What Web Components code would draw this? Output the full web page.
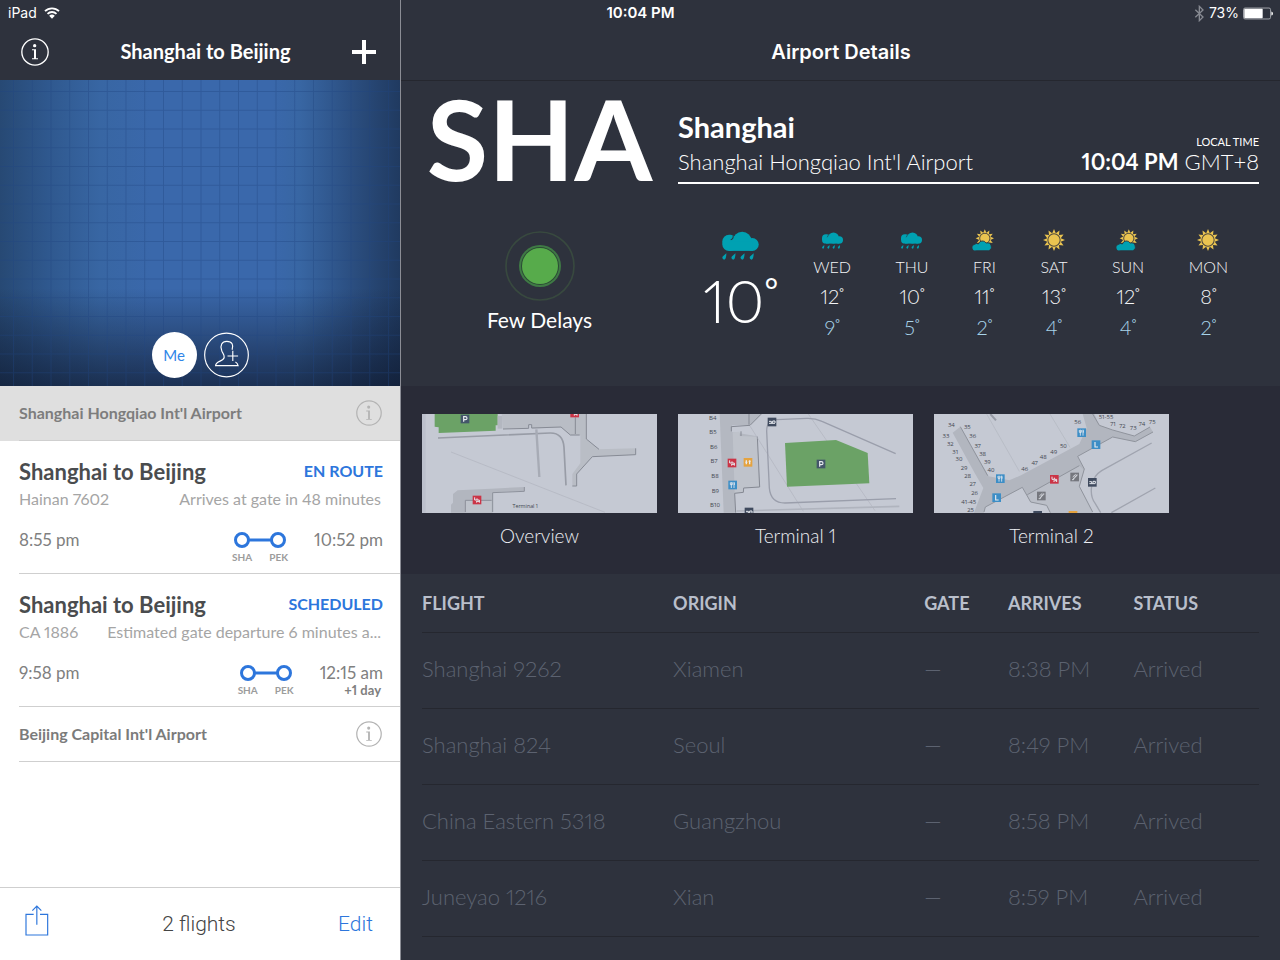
<!DOCTYPE html>
<html lang="en">
<head>
<meta charset="utf-8">
<meta name="viewport" content="width=device-width, initial-scale=1">
<title>Airport Details</title>
<style>
  html, body { height: 100%; }

  body {
    margin: 0;
    overflow: hidden;
    font-family: Lato, "Open Sans", sans-serif;
    font-variant-numeric: proportional-nums;
    --bar: #2e323d;
    --blue: #2d76dc;
    --system: Inter, Roboto, sans-serif;
  }
</style>
</head>
<body>
<flight-app></flight-app>

<script>
/* Attach an open shadow root filled with a copy of the markup */
function render(host, html) {
  let template = document.createElement('template');
  template.innerHTML = html;
  host.attachShadow({ mode: 'open' });
  host.shadowRoot.appendChild(document.importNode(template.content, true));
}

function define(name, view) {
  customElements.define(name, class extends HTMLElement {
    connectedCallback() {
      if(!this.shadowRoot)
        render(this, view(this));
    }
  });
}

/* Status bar */
define('status-bar', () => /* html */ `
  <style>
    :host {
      display: grid;
      grid-template-columns: 1fr auto 1fr;
      align-items: center;
      height: 26px;
      padding: 0 7px 0 8px;
      color: #fff;
      font: 400 14px/26px var(--system);
    }
    .side { display: flex; align-items: center; gap: 7px; }
    .end { justify-content: flex-end; gap: 4px; }
    .time { font-size: 15px; font-weight: 600; }
    svg { display: block; }
  </style>
  <div class="side">
    <span>iPad</span>
    <svg width="16" height="12" viewBox="0 0 48 36" fill="none" stroke="#fff" stroke-width="5.5">
      <path d="M3 12.500a30 30 0 0 1 42 0M10.500 20.500a19.500 19.500 0 0 1 27 0"/>
      <path d="M15.500 26.500a12 12 0 0 1 17 0L24 35z" fill="#fff" stroke="none"/>
    </svg>
  </div>
  <span class="time">10:04 PM</span>
  <div class="side end">
    <svg width="11" height="17" viewBox="0 0 33 51" fill="none" stroke="#878a92" stroke-width="4">
      <path d="M4 14l23 22-11 11V4l11 11L4 37"/>
    </svg>
    <span>73%</span>
    <svg width="30" height="13" viewBox="0 0 93 39">
      <rect x="1.500" y="2.500" width="84" height="34" rx="5" fill="none" stroke="#a4a6ac" stroke-width="3"/>
      <rect x="4" y="5" width="57" height="29" rx="2" fill="#fff"/>
      <path d="M88 13q5 1 5 6.500t-5 6.500z" fill="#fff"/>
    </svg>
  </div>
`);

/* Navigation bar, leaves room for the status bar above its title */
define('nav-bar', () => /* html */ `
  <style>
    :host {
      display: grid;
      grid-template-columns: 1fr auto 1fr;
      align-items: center;
      box-sizing: border-box;
      height: 80px;
      padding: 26px 20px 2px 21px;
      background: var(--bar);
      color: #fff;
    }
    h1 { margin: 0; font: inherit; font-size: 20px; line-height: 26px; white-space: nowrap; }
    .end { justify-self: end; }
  </style>
  <slot name="start"><span></span></slot>
  <h1 part="title"><slot></slot></h1>
  <div class="end"><slot name="end"></slot></div>
`);

define('info-button', host => /* html */ `
  <style>
    :host { display: block; width: 26px; height: 26px; }
    button {
      display: block;
      width: 100%;
      height: 100%;
      padding: 0;
      border: 0;
      background: none;
      color: inherit;
    }
    svg { display: block; width: 100%; height: 100%; }
  </style>
  <button aria-label="${host.getAttribute('label')}">
    <svg viewBox="0 0 84 84" fill="currentColor">
      <circle cx="42" cy="42" r="39.500" fill="none" stroke="currentColor" stroke-width="4"/>
      <circle cx="41" cy="23" r="5"/>
      <path d="M33 34h12v27h6v3H33v-3h6V37h-6z"/>
    </svg>
  </button>
`);

/* Blueprint map with the traveller buttons over its lower edge */
define('trip-map', () => /* html */ `
  <style>
    :host {
      display: grid;
      height: 306px;
      background:
        linear-gradient(transparent 68%, rgba(13, 22, 42, .68)),
        linear-gradient(90deg, #274974, #2f588e 12%, #3866a3 25%, #3a68ab 38%, #3a68ab 68%, #3866a3 75%, #2c5083 87%, #203a60);
    }
    :host > * { grid-area: 1 / 1; }
    .grid { display: block; width: 100%; height: 100%; }
    .people {
      display: flex;
      align-self: end;
      justify-content: center;
      gap: 7px;
      padding-bottom: 8px;
    }
    button {
      box-sizing: border-box;
      width: 45px;
      height: 46px;
      padding: 0;
      border: 0;
      border-radius: 50%;
      background: #fff;
      color: #2f86e8;
      font: 400 15px/46px Lato, sans-serif;
    }
    .add { background: none; color: #fff; }
    .add svg { display: block; }
  </style>
  <svg class="grid">
    <defs>
      <pattern id="cells" x="13" y="11" width="18.750" height="18.750" patternUnits="userSpaceOnUse">
        <path d="M.5 0V18.750M0 .5H18.750" stroke="#1f4580" stroke-opacity=".38"/>
      </pattern>
    </defs>
    <rect width="100%" height="100%" fill="url(#cells)"/>
  </svg>
  <div class="people">
    <button>Me</button>
    <button class="add" aria-label="Add traveller">
      <svg width="45" height="46" viewBox="609 771 136 138" fill="none" stroke="#fff" stroke-width="3.5">
        <circle cx="677" cy="840" r="66"/>
        <path d="M694 824C699 810 694 799 678 799S658 812 662 824C663 834 671 836 670 847C668 861 646 856 644 872H712C711 866 708 863 704 861M696 827V858M680 843H712"/>
      </svg>
    </button>
  </div>
`);

define('airport-row', host => /* html */ `
  <style>
    :host { display: block; padding-left: 19px; background: #fff; color: #7b7b7b; }
    :host([selected]) { background: #dfdfdf; color: #7d7d7d; }
    div {
      display: flex;
      align-items: center;
      justify-content: space-between;
      height: 54px;
      padding-right: 18px;
      border-bottom: 1px solid #cfcfcf;
      font-size: 16px;
      font-weight: 700;
    }
    span { padding-bottom: 2px; }
    info-button { color: #b4b4b4; }
  </style>
  <div>
    <span><slot></slot></span>
    <info-button label="${host.textContent} details"></info-button>
  </div>
`);

/* Two stops joined by a line */
define('trip-route', host => /* html */ `
  <style>
    :host { display: block; width: 56px; }
    svg { display: block; margin: 2px auto 0; }
    div {
      display: flex;
      justify-content: space-between;
      color: #9c9c9c;
      font-size: 10px;
      font-weight: 700;
      line-height: 18px;
    }
  </style>
  <svg width="52" height="16" fill="none" stroke="var(--blue)" stroke-width="3">
    <circle cx="8" cy="8" r="6.500"/>
    <circle cx="44" cy="8" r="6.500"/>
    <path d="M14 8H38"/>
  </svg>
  <div><span>${host.getAttribute('from')}</span><span>${host.getAttribute('to')}</span></div>
`);

define('flight-row', host => {
  let get = name => host.getAttribute(name) || '';
  return /* html */ `
    <style>
      :host { display: block; padding-left: 19px; background: #fff; color: #808080; }
      article { padding: 18px 17px 9px 0; border-bottom: 1px solid #cfcfcf; }
      .line { display: flex; justify-content: space-between; white-space: nowrap; }
      h2 { margin: 0; color: #4a4c4e; font-size: 22px; line-height: 26px; }
      .status { color: var(--blue); font-size: 16px; font-weight: 700; line-height: 24px; }
      .info { margin-top: 4px; padding-right: 2px; color: #a5a5a5; font-size: 16px; line-height: 20px; }
      .times { margin-top: 21px; height: 34px; font-size: 17px; line-height: 20px; }
      .arrival { display: flex; gap: 26px; text-align: right; }
      .day { padding-right: 2px; font-size: 13px; font-weight: 700; line-height: 14px; }
    </style>
    <article>
      <div class="line"><h2><slot></slot></h2><span class="status">${get('status')}</span></div>
      <div class="line info"><span>${get('flight')}</span><span>${get('note')}</span></div>
      <div class="line times">
        <span>${get('departs')}</span>
        <div class="arrival">
          <trip-route from="SHA" to="PEK"></trip-route>
          <div>${get('arrives')}<div class="day">${get('day')}</div></div>
        </div>
      </div>
    </article>
  `;
});

define('trip-toolbar', () => /* html */ `
  <style>
    :host {
      display: grid;
      grid-template-columns: 1fr auto 1fr;
      align-items: center;
      height: 72px;
      padding: 0 27px 0 25px;
      border-top: 1px solid #cfcfcf;
      background: #fff;
      color: #444;
      font: 300 21px/26px Roboto, "Liberation Sans", sans-serif;
    }
    button { padding: 0; border: 0; background: none; color: var(--blue); font: inherit; }
    .edit { justify-self: end; }
    .share { justify-self: start; padding-bottom: 8px; }
    svg { display: block; }
  </style>
  <button class="share" aria-label="Share">
    <svg width="24" height="31" viewBox="0 0 72 93" fill="none" stroke="currentColor" stroke-width="3.5">
      <path d="M26 28H3V90H68V28H45M35.500 59V4M22 17L35.500 3.500L49 17"/>
    </svg>
  </button>
  <span>2 flights</span>
  <button class="edit">Edit</button>
`);

define('trip-sidebar', () => /* html */ `
  <style>
    :host {
      display: flex;
      flex-direction: column;
      min-width: 0;
      background: #fff;
    }
    nav-bar { font-weight: 700; }
    nav-bar::part(title) { padding: 0 0 3px 10px; }
    info-button[slot] { width: 28px; height: 28px; }
    .plus { display: block; padding: 0; border: 0; background: none; }
    .plus svg { display: block; }
    main { flex: 1; }
  </style>
  <nav-bar>
    <info-button slot="start" label="About"></info-button>
    Shanghai to Beijing
    <button class="plus" slot="end" aria-label="Add flight">
      <svg width="32" height="24" viewBox="0 0 32 24" stroke="#fff" stroke-width="4"><path d="M4 12H28M16 0V24"/></svg>
    </button>
  </nav-bar>
  <trip-map></trip-map>
  <main>
    <airport-row selected>Shanghai Hongqiao Int'l Airport</airport-row>
    <flight-row status="EN ROUTE" flight="Hainan 7602" note="Arrives at gate in 48 minutes"
      departs="8:55 pm" arrives="10:52 pm">Shanghai to Beijing</flight-row>
    <flight-row status="SCHEDULED" flight="CA 1886" note="Estimated gate departure 6 minutes a..."
      departs="9:58 pm" arrives="12:15 am" day="+1 day">Shanghai to Beijing</flight-row>
    <airport-row>Beijing Capital Int'l Airport</airport-row>
  </main>
  <trip-toolbar></trip-toolbar>
`);

define('delay-status', () => /* html */ `
  <style>
    :host { display: block; color: #fff; text-align: center; font-size: 21px; line-height: 28px; }
    svg { display: block; margin: 0 auto 5px; }
  </style>
  <svg width="70" height="70" viewBox="0 0 210 210">
    <circle cx="105" cy="105" r="102" fill="none" stroke="#38493f" stroke-width="5"/>
    <circle cx="105" cy="105" r="63" fill="#3f7a45"/>
    <circle cx="105" cy="105" r="57" fill="#2b4a35"/>
    <circle cx="105" cy="105" r="54" fill="#57ab4b"/>
  </svg>
  <slot></slot>
`);

/* Weather glyphs */
function star(cx, cy, outer, inner) {
  let points = [];
  for(let i = 0; i < 24; i++) {
    let r = i % 2 ? inner : outer;
    let a = i * Math.PI / 12;
    points.push((cx + r * Math.sin(a)).toFixed(1) + ',' + (cy - r * Math.cos(a)).toFixed(1));
  }
  return `<polygon points="${points.join(' ')}" fill="#eac450"/>`;
}

function sun(cx, cy, r) {
  return star(cx, cy, r, r * .64) +
    `<circle cx="${cx}" cy="${cy}" r="${r * .56}" fill="#eac450" stroke="#4f4a3f" stroke-width="5"/>`;
}

const cloud = `
  <rect x="0" y="10" width="44" height="48" rx="20"/>
  <circle cx="59" cy="29" r="28"/>
  <rect x="70" y="20" width="38" height="38" rx="19"/>
  <rect x="20" y="30" width="70" height="28"/>
  <path d="M25 25Q34 22 32 11" fill="none" stroke="#2e323d" stroke-width="3"/>
`;

const glyphs = {
  rain: `
    <g fill="#00a1b2">${cloud}
      <path d="M12 65Q12 84 5 84Q-3 80 2 74Z"/>
      <path d="M39 65Q39 84 32 84Q24 80 29 74Z"/>
      <path d="M66 65Q66 84 59 84Q51 80 56 74Z"/>
      <path d="M93 65Q93 84 86 84Q78 80 83 74Z"/>
    </g>`,
  sun: sun(54, 42, 54),
  partly: sun(58, 34, 45) +
    `<g fill="#00a1b2" stroke="#2e323d" transform="translate(0 45) scale(.86)">
      <path stroke-width="5" d="M18 58A17 17 0 0 1 8 22Q18 12 31 19A24 24 0 0 1 75 14A20 20 0 0 1 88 58Z"/>
    </g>`
};

define('weather-icon', host => /* html */ `
  <style>
    :host { display: block; }
    svg { display: block; margin: auto; overflow: visible; }
    .rain { width: 21px; height: 17px; }
    .sun, .partly { width: 22px; height: 22px; }
    :host([large]) svg { width: 37px; height: 29px; }
  </style>
  <svg class="${host.getAttribute('type')}" viewBox="0 -1 108 86">${glyphs[host.getAttribute('type')]}</svg>
`);

/* A number with a small raised ring */
define('weather-degrees', () => /* html */ `
  <style>
    :host { display: inline; }
    span { font-size: 55%; font-weight: 400; line-height: 0; vertical-align: .65em; }
  </style>
  <slot></slot><span>°</span>
`);

define('weather-day', host => /* html */ `
  <style>
    :host { display: block; color: #f4f5f7; text-align: center; font-weight: 300; }
    weather-icon { display: flex; align-items: center; height: 24px; }
    div { font-size: 20px; line-height: 24px; white-space: nowrap; }
    .name { margin: 5px 0 7px; font-size: 16px; line-height: 20px; }
    .low { margin-top: 7px; color: #a9d4ea; }
  </style>
  <weather-icon type="${host.getAttribute('type')}"></weather-icon>
  <div class="name"><slot></slot></div>
  <div><weather-degrees>${host.getAttribute('high')}</weather-degrees></div>
  <div class="low"><weather-degrees>${host.getAttribute('low')}</weather-degrees></div>
`);

define('airport-hero', () => /* html */ `
  <style>
    :host {
      display: grid;
      grid-template-columns: 235px 1fr;
      column-gap: 21px;
      padding: 14px 21px 0;
      color: #fff;
    }
    .code { align-self: start; text-align: center; font-size: 112px; font-weight: 700; line-height: 86px; }
    .info {
      display: flex;
      align-items: flex-end;
      justify-content: space-between;
      padding: 15px 0 6px;
      border-bottom: 2px solid #fff;
      font-size: 22px;
      font-weight: 300;
      line-height: 28px;
      white-space: nowrap;
    }
    h2 { margin: 0 0 4px; font-size: 29px; font-weight: 700; line-height: 34px; }
    .local { text-align: right; }
    .label { font-size: 11px; font-weight: 400; line-height: 13px; }
    b { font-weight: 700; }
    delay-status { margin: 47px 0 52px; }
    .weather { display: flex; gap: 35px; margin-top: 44px; padding: 0 31px 0 25px; }
    .now { text-align: center; font-size: 60px; font-weight: 300; line-height: 80px; }
    .now weather-icon { padding-top: 3px; }
    .days { display: flex; flex: 1; justify-content: space-between; }
  </style>
  <div class="code">SHA</div>
  <div class="info">
    <div><h2>Shanghai</h2>Shanghai Hongqiao Int'l Airport</div>
    <div class="local"><div class="label">LOCAL TIME</div><b>10:04 PM</b> GMT+8</div>
  </div>
  <delay-status>Few Delays</delay-status>
  <div class="weather">
    <div class="now"><weather-icon type="rain" large></weather-icon><weather-degrees>10</weather-degrees></div>
    <div class="days">
      <weather-day type="rain" high="12" low="9">WED</weather-day>
      <weather-day type="rain" high="10" low="5">THU</weather-day>
      <weather-day type="partly" high="11" low="2">FRI</weather-day>
      <weather-day type="sun" high="13" low="4">SAT</weather-day>
      <weather-day type="partly" high="12" low="4">SUN</weather-day>
      <weather-day type="sun" high="8" low="2">MON</weather-day>
    </div>
  </div>
`);

/* Small square signs on the terminal maps */
const signs = {
  parking: ['#44566a', '<path d="M-4 8V-7H1Q6 -7 6 -2.500T1 2H-4" stroke-width="3.500"/>'],
  escalator: ['#cb3446', '<path d="M-7 -8V0H0V-5M0 0H7V8M-1 8V3M7 4H0" stroke-width="3"/>'],
  food: ['#3d8ec6', '<path d="M-4 -9V9M4 -9V9M-7 -8V-1H-1V-8M5 -7V0" stroke-width="2.500"/>'],
  lounge: ['#3d8ec6', '<path d="M-3 -8V7H6" stroke-width="3.500"/>'],
  people: ['#e5a33f', '<path d="M-5 -6V6M5 -6V6M-8 0H-2M2 -3H8" stroke-width="4"/>'],
  stairs: ['#75777e', '<path d="M-8 8H-3V3H1V-2H5V-6H9M-6 0L3 -8" stroke-width="2.500"/>'],
  bus: ['#3f4a5e', '<path d="M-9 4H9M-9 -2H-2V3M2 3V-3H9V3" stroke-width="3"/>']
};

function sign(type, x, y) {
  let [fill, mark] = signs[type];
  return `<g transform="translate(${x} ${y})" fill="none" stroke="#e8ebf0">
    <rect x="-13" y="-13" width="26" height="26" fill="${fill}" stroke="none"/>${mark}</g>`;
}

function labels(list) {
  return list.map(([text, x, y]) => `<text x="${x}" y="${y}">${text}</text>`).join('');
}

const maps = {
  overview: `
    <path d="M21 28H32V324H21Z" fill="#bcc0cc"/>
    <path d="M59 28H248V62H242V78L71 85V68L59 66Z" fill="#6ba266"/>
    <path d="M248 34H262V72H248Z" fill="#b3b7c0"/>
    <path d="M260 28H514V103L552 134L662 131V150L532 156L485 208V243H472V208L496 176V92H466L438 68L350 72V60H341V70L264 73Z" fill="#b9bdc5"/>
    <path d="M264 73L341 71V60H350V70L438 67L466 91H494M514 28V103L552 134M662 131V150L532 156L485 208V244H472M481 38V88" fill="none" stroke="#878b95" stroke-width="3"/>
    <path d="M69 100L405 85Q444 84 447 128L453 242" fill="none" stroke="#989ca6" stroke-width="5"/>
    <path d="M364 74L373 217" fill="none" stroke="#a7abb5" stroke-width="7"/>
    <path d="M108 142L570 323" fill="none" stroke="#b0b4be" stroke-width="2"/>
    <path d="M128 257L228 252L328 247V259L233 263V324H108V300L114 294V268Z" fill="#b2b6bf"/>
    <path d="M152 287H230V324H152Z" fill="#bfc3cb"/>
    <path d="M328 247V260L233 264V322M151 322V287H230" fill="none" stroke="#8d919b" stroke-width="3"/>
    ${sign('parking', 150, 43)}${sign('escalator', 479, 25)}${sign('escalator', 186, 286)}
    <g font-size="16">${labels([['Terminal 1', 331, 309]])}</g>`,
  terminal1: `
    <path d="M149 28H274L240 62H186V82L262 95L269 247L221 250L220 263L194 266L197 324H161Z" fill="#b4b8c1"/>
    <path d="M188 83L209 81V94L262 96L267 246L221 249V262L194 264Z" fill="#bfc3cb"/>
    <path d="M274 28L240 62L184 66V80M237 28V60M213 80V94M262 96L269 247L221 250L220 263L194 266L197 324" fill="none" stroke="#858993" stroke-width="3"/>
    <path d="M240 64L400 320M415 28L615 318" stroke="#b0b4be" stroke-width="2"/>
    <path d="M677 147L456 50Q435 40 410 41L320 45Q290 44 290 80L298 250Q302 295 345 295L678 282" fill="none" stroke="#9a9eab" stroke-width="4"/>
    <path d="M200 319L688 305" stroke="#b0b4be" stroke-width="5"/>
    <path d="M345 115L498 106L593 145L598 236L351 246Z" fill="#6ba266"/>
    ${sign('bus', 306, 52)}${sign('parking', 453, 178)}${sign('escalator', 186, 175)}
    ${sign('people', 234, 173)}${sign('food', 188, 241)}${sign('bus', 237, 322)}
    <g font-size="18">${labels([['B4', 128, 45], ['B5', 129, 88], ['B6', 131, 133], ['B7', 132, 176], ['B8', 135, 219], ['B9', 136, 264], ['B10', 135, 308]])}</g>`,
  terminal2: `
    <path d="M80 84L103 66L188 215L250 227L285 212L460 118L482 70L470 28H505L520 62L560 76L625 94L672 67L681 82L628 111L560 97L455 155L475 193L460 245L500 324H372L362 302L314 292L289 248L178 307L174 324H144L172 250L146 205Z" fill="#b2b6bf"/>
    <path d="M304 270L460 183L474 196L460 245L500 324H372L362 302L314 292Z" fill="#bbbfc8"/>
    <path d="M103 66L185 213M500 28L520 62L560 76L625 94L672 67M681 82L628 111L560 97L455 155L475 193L460 245L500 322M174 322L178 307L289 248L314 292L362 302L373 324M304 270L460 183" fill="none" stroke="#90949d" stroke-width="3"/>
    <path d="M182 28L280 200M372 28L432 128" stroke="#b2b6c0" stroke-width="2"/>
    <path d="M677 115L527 198Q500 215 502 240M497 245Q492 275 508 297L524 324M556 324L688 250" fill="none" stroke="#a0a4af" stroke-width="4"/>
    <path d="M193 28L210 47" stroke="#979ba6" stroke-width="6"/>
    ${sign('food', 467, 84)}${sign('lounge', 510, 120)}${sign('food', 223, 222)}${sign('lounge', 212, 279)}
    ${sign('escalator', 385, 224)}${sign('stairs', 446, 217)}${sign('stairs', 346, 274)}${sign('bus', 499, 233)}
    ${sign('bus', 335, 332)}${sign('people', 441, 332)}
    <g font-size="18">${labels([['34', 76, 67], ['33', 60, 99], ['32', 73, 123], ['31', 88, 147], ['30', 99, 170],
      ['29', 114, 196], ['28', 125, 219], ['27', 140, 245], ['26', 146, 271], ['41-45', 128, 297], ['25', 134, 321],
      ['35', 124, 72], ['36', 140, 101], ['37', 155, 129], ['38', 170, 153], ['39', 184, 178], ['40', 195, 202],
      ['46', 296, 198], ['47', 326, 181], ['48', 352, 163], ['49', 383, 147], ['50', 412, 129], ['56', 455, 58],
      ['51-55', 540, 43], ['71', 561, 63], ['72', 589, 71], ['73', 622, 76], ['74', 648, 63], ['75', 679, 58]])}</g>`
};

define('terminal-card', host => /* html */ `
  <style>
    :host { display: block; color: #eef0f4; text-align: center; font-size: 19px; font-weight: 300; line-height: 28px; }
    a { display: block; color: inherit; text-decoration: none; }
    svg {
      display: block;
      width: 100%;
      margin-bottom: 9px;
      background: #c5c9d3;
      fill: #42464f;
      font-family: "Open Sans", sans-serif;
      font-weight: 400;
      text-anchor: middle;
    }
  </style>
  <a href="#${host.getAttribute('map')}">
    <svg viewBox="${host.getAttribute('map') === 'overview' ? 21 : 24} 28 705 297">${maps[host.getAttribute('map')]}</svg>
    <slot></slot>
  </a>
`);

define('terminal-list', () => /* html */ `
  <style>
    :host {
      display: grid;
      grid-template-columns: repeat(auto-fill, 235px);
      gap: 21px;
      padding: 28px 21px 24px;
      background: #292b37;
    }
  </style>
  <terminal-card map="overview">Overview</terminal-card>
  <terminal-card map="terminal1">Terminal 1</terminal-card>
  <terminal-card map="terminal2">Terminal 2</terminal-card>
`);

const arrivals = [
  ['Shanghai 9262', 'Xiamen', '—', '8:38 PM', 'Arrived'],
  ['Shanghai 824', 'Seoul', '—', '8:49 PM', 'Arrived'],
  ['China Eastern 5318', 'Guangzhou', '—', '8:58 PM', 'Arrived'],
  ['Juneyao 1216', 'Xian', '—', '8:59 PM', 'Arrived']
];

define('arrivals-table', () => /* html */ `
  <style>
    :host { display: block; padding: 0 21px; }
    table { width: 100%; border-collapse: collapse; table-layout: fixed; text-align: left; white-space: nowrap; }
    th, td { box-sizing: border-box; padding: 0; border-bottom: 1px solid #25272f; }
    th { width: 15%; height: 58px; color: #b9bfcb; font-size: 18px; font-weight: 700; }
    th:nth-child(-n+2) { width: 30%; }
    th:nth-child(3) { width: 10%; }
    td { height: 76px; padding-bottom: 4px; color: #5c6270; font-size: 22px; font-weight: 300; }
  </style>
  <table>
    <thead><tr><th>FLIGHT</th><th>ORIGIN</th><th>GATE</th><th>ARRIVES</th><th>STATUS</th></tr></thead>
    <tbody>
      ${arrivals.map(row => `<tr>${row.map(cell => `<td>${cell}</td>`).join('')}</tr>`).join('')}
    </tbody>
  </table>
`);

define('airport-details', () => /* html */ `
  <style>
    :host {
      display: block;
      min-width: 0;
      overflow: hidden;
      border-left: 1px solid #8b8d95;
      background: var(--bar);
    }
    nav-bar { height: 81px; border-bottom: 1px solid #25272f; font-family: var(--system); font-weight: 600; }
  </style>
  <nav-bar>Airport Details</nav-bar>
  <airport-hero></airport-hero>
  <terminal-list></terminal-list>
  <arrivals-table></arrivals-table>
`);

/* Both panes run up behind the status bar */
define('flight-app', () => /* html */ `
  <style>
    :host {
      display: grid;
      grid-template: 26px 1fr / 5fr 11fr;
      height: 100vh;
    }
    status-bar { grid-area: 1 / 1 / 2 / 3; z-index: 1; }
    trip-sidebar { grid-area: 1 / 1 / 3 / 2; }
    airport-details { grid-area: 1 / 2 / 3 / 3; }
  </style>
  <status-bar></status-bar>
  <trip-sidebar></trip-sidebar>
  <airport-details></airport-details>
`);
</script>
</body>
</html>
